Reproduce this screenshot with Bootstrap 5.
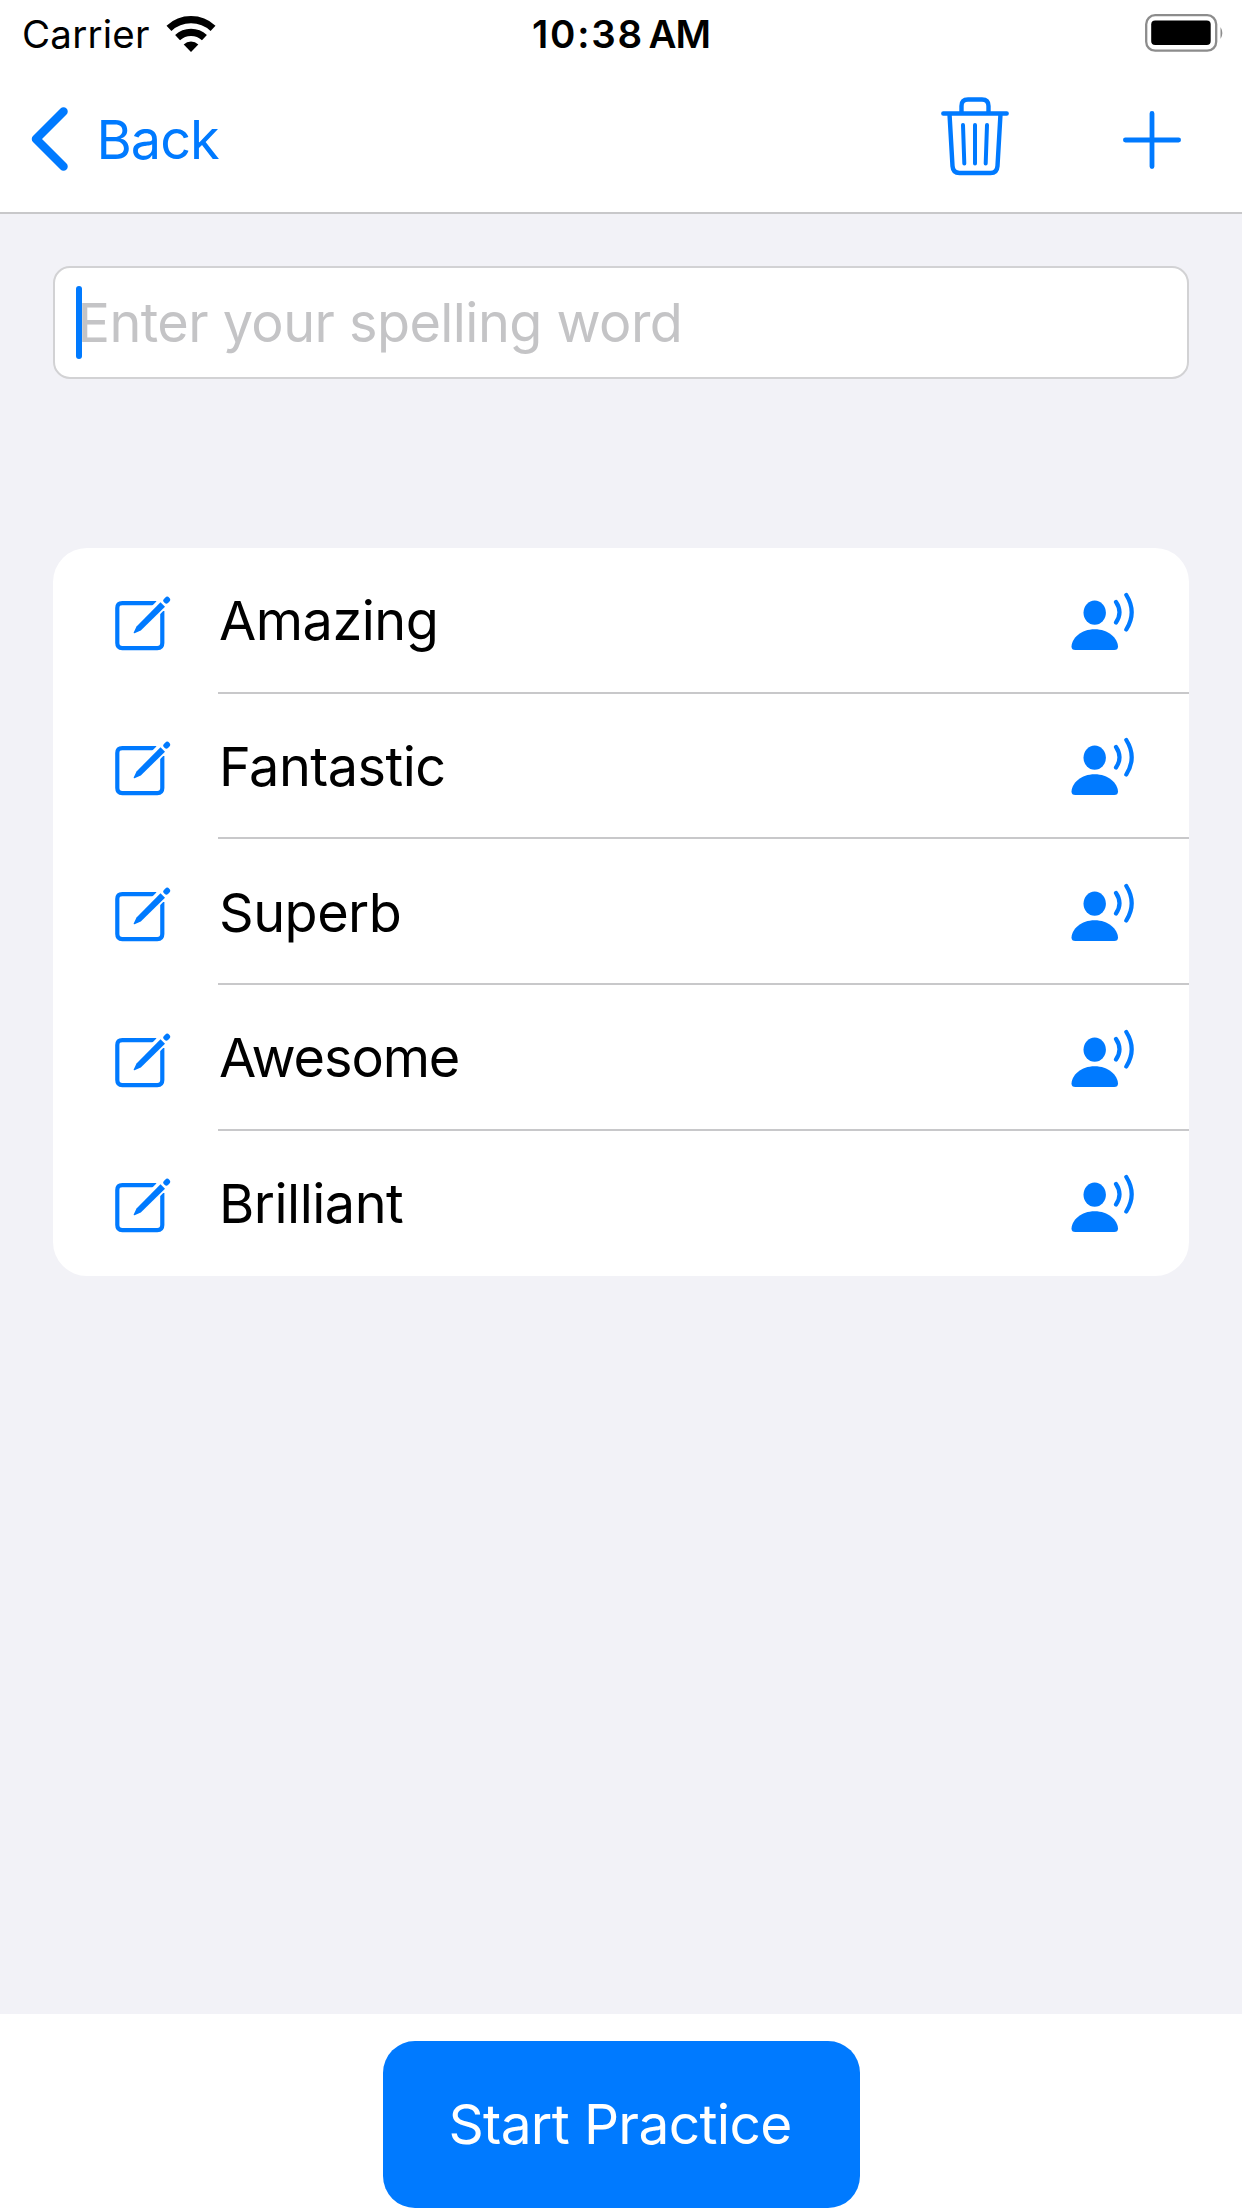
<!DOCTYPE html>
<html lang="en">
<head>
<meta charset="utf-8">
<meta name="viewport" content="width=device-width, initial-scale=1">
<title>Spelling Words</title>
<link href="https://cdn.jsdelivr.net/npm/bootstrap@5.3.0/dist/css/bootstrap.min.css" rel="stylesheet">
<style>
  :root { --ios-blue: #007aff; --ios-gray: #f2f2f7; --ios-line: #c8c8ca; }
  body { font-family: Inter, "Liberation Sans", sans-serif; font-size: 54px; line-height: 66px; color: #000; background: #fff; overflow: hidden; }
  svg { display: block; flex: none; }
  .screen { height: 2208px; }
  .status { flex: none; height: 66px; font-size: 38.5px; line-height: 46px; padding: 2px 17px 0 22px; }
  .status > div { flex: 1 1 0; }
  .t-carrier { letter-spacing: .2px; }
  .clock { font-weight: 600; letter-spacing: 1.800px; word-spacing: -7px; margin-right: 5px; }
  .meridiem { letter-spacing: -1px; }
  .topbar { flex: none; height: 148px; padding: 0 61px 0 31px; border-bottom: 2px solid var(--ios-line); }
  .trash { margin-right: 113px; margin-bottom: 7px; }
  .plus { margin-top: 2px; }
  .blue, .blue:hover { color: var(--ios-blue); }
  .t-back { letter-spacing: -1px; margin-left: 27.500px; padding-top: 1px; }
  .page { background: var(--ios-gray); padding: 52px 53px 0; }
  .word-field { height: 113px; border: 2px solid #d2d2d4; border-radius: 17px; background: #fff; color: #c4c4c6; padding-left: 21px; }
  .caret { width: 6px; height: 73px; border-radius: 3px; background: var(--ios-blue); margin-right: -4.500px; z-index: 1; }
  .t-ph { letter-spacing: -.56px; padding-top: 1px; }
  .words { margin-top: 169px; border-radius: 34px; background: #fff; }
  .word-row { height: 145.66px; padding: 0; border: 0; background: transparent; color: #000; }
  .word-row .ico { margin: 4px 47px 0 62px; }
  .word-body { border-bottom: 2px solid var(--ios-line); padding-right: 54px; }
  .word-body span { padding: 3px 0 0 1px; letter-spacing: -.5px; }
  .word-body .snug { letter-spacing: -1.100px; }
  .word-row:last-child .word-body { border-color: transparent; }
  .foot { flex: none; height: 194px; padding-top: 27px; }
  .start { width: 477px; height: 167px; border-radius: 32px; background: var(--ios-blue) !important; color: #fff; font-size: 55px; letter-spacing: -.66px; border: 0; padding: 0 2px 0 0; }
</style>
</head>
<body>
<svg class="d-none" aria-hidden="true">
  <symbol id="edit" viewBox="0 0 56 56">
    <path d="M41.500 8.100H7.300Q2.300 8.100 2.300 13.100V48.100Q2.300 53.100 7.300 53.100H42.300Q47.300 53.100 47.300 48.100V16" fill="none" stroke="#007aff" stroke-width="4.200"/>
    <path d="M30 26 56 0" stroke="#fff" stroke-width="11.500"/>
    <path d="M18.700 37.500 21.500 31.500 45.500 7.200 50 11.700 25.800 35.500 19.500 38.200Q18.500 38.500 18.700 37.500Z" fill="#007aff"/>
    <path d="m51.200 5.700 1-1" stroke="#007aff" stroke-width="5.800" stroke-linecap="round"/>
    <path d="m46.500 5.700 4.800 4.800" stroke="#fff" stroke-width="1.200"/>
  </symbol>
  <symbol id="voice" viewBox="0 0 64 60">
    <ellipse cx="23.700" cy="22.700" rx="11.200" ry="12.100" fill="#007aff"/>
    <path d="M4.300 60Q.5 60 .5 56.500C1 48 10 39.300 23.700 39.300S46.500 48 47 56.500Q47 60 43.200 60Z" fill="#007aff"/>
    <path d="M45 12q7 10.300 0 20.500M55.300 5q10.800 17.200 0 34.500" fill="none" stroke="#007aff" stroke-width="4.200" stroke-linecap="round"/>
  </symbol>
</svg>
<div class="screen d-flex flex-column">
  <header class="status d-flex align-items-center">
    <div class="d-flex align-items-center"><span class="t-carrier">Carrier</span>
      <svg class="wifi ms-3" width="50" height="40" viewBox="0 0 50 40"><g fill="none" stroke="#000" stroke-width="7.200"><path d="M2.970 14.380A32.300 32.300 0 0 1 47.030 14.380M11.560 23.590A19.700 19.700 0 0 1 38.440 23.590"/></g><path d="M25 38 17.700 30.400A10.500 10.500 0 0 1 32.300 30.400Z"/></svg>
    </div>
    <span class="clock">10:38 <span class="meridiem">AM</span></span>
    <div class="d-flex justify-content-end"><svg width="80" height="40" viewBox="0 0 80 40"><rect x="1.200" y="1.200" width="70" height="35.500" rx="9" fill="#fff" stroke="#8c8c8c" stroke-width="2.300"/><rect x="6.200" y="6.500" width="59.500" height="24.600" rx="4"/><path d="M75.500 13q3.700 6 0 12Z" fill="#8c8c8c"/></svg></div>
  </header>
  <nav class="topbar d-flex align-items-center">
    <a class="blue d-flex align-items-center text-decoration-none me-auto" href="#"><svg width="38" height="66" viewBox="0 0 38 66"><path d="M32.500 5.500 5 33l27.500 27.500" fill="none" stroke="#007aff" stroke-width="8.500" stroke-linecap="round" stroke-linejoin="round"/></svg><span class="t-back">Back</span></a>
    <svg class="trash" width="70" height="80" viewBox="0 0 70 80" fill="none" stroke="#007aff" stroke-linecap="round" stroke-linejoin="round"><path stroke-width="4.400" d="M3.300 17.500H66.700M21.500 17V10q0-6.500 6.500-6.500H42q6.500 0 6.500 6.500v7M9.500 18 12.500 70q.5 7 7 7H50.500q6.500 0 7-7L60.500 18"/><path stroke-width="4" d="m23 29 1.300 38.500M35 29V67.500M47 29 45.700 67.500"/></svg>
    <svg class="plus" width="58" height="58" viewBox="0 0 58 58"><path d="M29 2.400V55.600M2.400 29H55.600" stroke="#007aff" stroke-width="4.800" stroke-linecap="round"/></svg>
  </nav>
  <main class="page flex-grow-1">
    <div class="word-field d-flex align-items-center"><span class="caret"></span><span class="t-ph">Enter your spelling word</span></div>
    <div class="words list-group list-group-flush">
      <div class="word-row list-group-item d-flex align-items-center"><svg class="ico" width="56" height="56"><use href="#edit"/></svg><div class="word-body d-flex flex-fill h-100 align-items-center justify-content-between"><span>Amazing</span><svg width="64" height="60"><use href="#voice"/></svg></div></div>
      <div class="word-row list-group-item d-flex align-items-center"><svg class="ico" width="56" height="56"><use href="#edit"/></svg><div class="word-body d-flex flex-fill h-100 align-items-center justify-content-between"><span>Fantastic</span><svg width="64" height="60"><use href="#voice"/></svg></div></div>
      <div class="word-row list-group-item d-flex align-items-center"><svg class="ico" width="56" height="56"><use href="#edit"/></svg><div class="word-body d-flex flex-fill h-100 align-items-center justify-content-between"><span>Superb</span><svg width="64" height="60"><use href="#voice"/></svg></div></div>
      <div class="word-row list-group-item d-flex align-items-center"><svg class="ico" width="56" height="56"><use href="#edit"/></svg><div class="word-body d-flex flex-fill h-100 align-items-center justify-content-between"><span class="snug">Awesome</span><svg width="64" height="60"><use href="#voice"/></svg></div></div>
      <div class="word-row list-group-item d-flex align-items-center"><svg class="ico" width="56" height="56"><use href="#edit"/></svg><div class="word-body d-flex flex-fill h-100 align-items-center justify-content-between"><span>Brilliant</span><svg width="64" height="60"><use href="#voice"/></svg></div></div>
    </div>
  </main>
  <footer class="foot d-flex justify-content-center align-items-start"><button class="start btn btn-primary" type="button">Start Practice</button></footer>
</div>
<script src="https://cdn.jsdelivr.net/npm/bootstrap@5.3.0/dist/js/bootstrap.bundle.min.js"></script>
</body>
</html>
